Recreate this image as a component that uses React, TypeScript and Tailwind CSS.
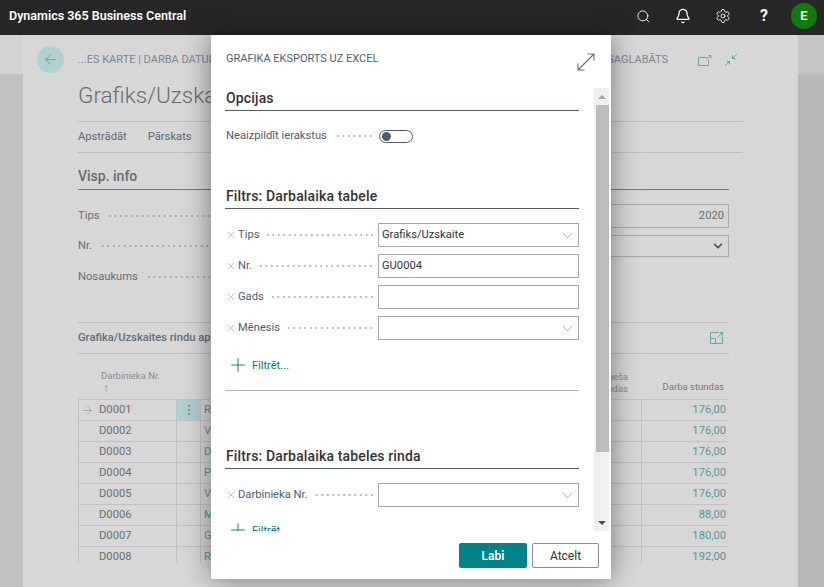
import { ArrowLeft, ArrowRight, Bell, ChevronDown, EllipsisVertical, Plus, Search, Settings, X } from "lucide-react";

const rows = [
  { id: "D0001", name: "R", hours: "176,00" },
  { id: "D0002", name: "V", hours: "176,00" },
  { id: "D0003", name: "D", hours: "176,00" },
  { id: "D0004", name: "P", hours: "176,00" },
  { id: "D0005", name: "V", hours: "176,00" },
  { id: "D0006", name: "M", hours: "88,00" },
  { id: "D0007", name: "G", hours: "180,00" },
  { id: "D0008", name: "R", hours: "192,00" },
];

const dots = "flex-1 h-[2px] bg-[radial-gradient(circle,#b4b9c0_0.7px,transparent_1px)] bg-[length:5.5px_2px] bg-repeat-x";
const pageDots = "flex-1 h-[2px] bg-[radial-gradient(circle,#a8a8a8_0.7px,transparent_1px)] bg-[length:5.5px_2px] bg-repeat-x";

function FilterField({ label, value, select }: { label: string; value?: string; select?: boolean }) {
  return (
    <div className="flex items-center h-[24px]">
      <div className="w-[153px] flex items-center pr-[5px] text-[#505c6d]">
        <X size={12} strokeWidth={1} className="text-[#8b929c] mr-px shrink-0" />
        <span className="mr-[6px] pt-px">{label}</span>
        <span className={dots} />
      </div>
      <div className="w-[201px] h-[24px] border border-[#a6a6a6] flex items-center justify-between pl-[3px] pr-[2px] text-[#333]">
        <span className="pt-px">{value}</span>
        {select && <ChevronDown size={17} strokeWidth={0.8} className="text-[#6b6b6b]" />}
      </div>
    </div>
  );
}

function SectionTitle({ children }: { children: string }) {
  return (
    <div className="w-[354px] h-[23px] border-b border-[#505c6d] pl-px text-[14px] leading-[21px] tracking-[0.15px] font-medium text-[#333]">
      {children}
    </div>
  );
}

function AddFilter() {
  return (
    <div className="flex items-center h-[20px] pl-[2px] text-[#00797c] text-[11px]">
      <Plus size={22} strokeWidth={1} className="mr-[3px] mb-[3px] shrink-0" />
      <span>Filtrēt...</span>
    </div>
  );
}

function ExportDialog() {
  return (
    <div className="absolute left-[211px] top-[35px] w-[400px] h-[544px] bg-white flex flex-col shadow-[0_0_26px_rgba(0,0,0,0.45)] text-[11.2px]">
      <div className="h-[53px] shrink-0 flex items-start justify-between pl-[15px] pr-[16px] pt-[17px]">
        <span className="text-[11px] leading-[13px] text-[#505c6d]">GRAFIKA EKSPORTS UZ EXCEL</span>
        <svg width="18" height="18" viewBox="0 0 18 18" fill="none" stroke="#6f6f6f" strokeWidth="1.1" className="mt-px">
          <path d="M1 17 17 1M10.5 1H17V7.5M1 10.5V17H7.5" />
        </svg>
      </div>

      <div className="h-[443px] shrink-0 flex">
        <div className="w-[383px] overflow-hidden pl-[14px]">
          <SectionTitle>Opcijas</SectionTitle>
          <div className="flex items-center h-[16px] mt-[17px] text-[#505c6d]">
            <div className="w-[154px] flex items-center pl-px pr-[7px]">
              <span className="mr-[8px]">Neaizpildīt ierakstus</span>
              <span className={dots} />
            </div>
            <div className="w-[34px] h-[13px] rounded-full border border-[#505c6d] flex items-center pl-[2px]">
              <span className="w-[9px] h-[9px] rounded-full bg-[#505c6d]" />
            </div>
          </div>

          <div className="h-[42px]" />
          <SectionTitle>Filtrs: Darbalaika tabele</SectionTitle>
          <div className="mt-[14px] flex flex-col gap-[7px] w-[354px]">
            <FilterField label="Tips" value="Grafiks/Uzskaite" select />
            <FilterField label="Nr." value="GU0004" />
            <FilterField label="Gads" />
            <FilterField label="Mēnesis" select />
          </div>
          <div className="mt-[16px]">
            <AddFilter />
          </div>
          <div className="w-[354px] mt-[14px] border-b border-[#b3b8c0]" />

          <div className="h-[55px]" />
          <SectionTitle>Filtrs: Darbalaika tabeles rinda</SectionTitle>
          <div className="mt-[14px] w-[354px]">
            <FilterField label="Darbinieka Nr." select />
          </div>
          <div className="mt-[14px]">
            <AddFilter />
          </div>
        </div>

        <div className="w-[15px] bg-[#f0f0f0] flex flex-col">
          <div className="h-[17px] flex items-center justify-center">
            <div className="w-0 h-0 border-x-[4px] border-x-transparent border-b-[4px] border-b-[#a3a3a3]" />
          </div>
          <div className="ml-[2px] w-[13px] h-[347px] bg-[#bdbdbd]" />
          <div className="flex-1" />
          <div className="h-[17px] flex items-center justify-center">
            <div className="w-0 h-0 border-x-[4px] border-x-transparent border-t-[4px] border-t-[#505050]" />
          </div>
        </div>
      </div>

      <div className="flex justify-end gap-[5px] pr-[12px] pt-[12px] text-[12px]">
        <button className="w-[68px] h-[25px] rounded-[2px] bg-[#008489] text-white font-semibold">Labi</button>
        <button className="w-[67px] h-[25px] rounded-[2px] border border-[#8a8a8a] text-[#333]">Atcelt</button>
      </div>
    </div>
  );
}

function PageCard() {
  return (
    <div className="flex-1 bg-[#d7d7d7] flex text-[#6d6d6d] text-[11.2px]">
      <div className="w-[14px] shrink-0" />
      <div className="flex flex-col w-[27px] shrink-0 pt-[11px]">
        <div className="w-[27px] h-[27px] rounded-full bg-[#b0d0d2] flex items-center justify-center">
          <ArrowLeft size={17} strokeWidth={0.9} className="text-[#6a7f80]" />
        </div>
      </div>
      <div className="ml-[14px] w-[665px] flex flex-col">
        <div className="h-[18px] mt-[16px] pr-[5px] flex items-center justify-between text-[11px] text-[#7f8690]">
          <span>...ES KARTE | DARBA DATUMI</span>
          <div className="flex items-center">
            <span className="mr-[30px]">SAGLABĀTS</span>
            <svg width="14" height="11" viewBox="0 0 14 11" fill="none" stroke="#6ea3a5" strokeWidth="1" className="mr-[12px]">
              <path d="M9 2.5H.5v8h10V5M8.5 4.5 13 .5M10.5.5H13V3" />
            </svg>
            <svg width="14" height="14" viewBox="0 0 14 14" fill="none" stroke="#6ea3a5" strokeWidth="1">
              <path d="M13 1 8.5 5.5M8.5 2.5v3h3M1 13l4.5-4.5M2.5 8.5h3v3" />
            </svg>
          </div>
        </div>
        <div className="h-[32px] mt-[10px] text-[22.5px] leading-[32px] font-light text-[#6b6b6b]">Grafiks/Uzskaite</div>
        <div className="h-[30px] mt-[10px] border-y border-[#bdbdbd] w-[665px] flex items-center gap-[21px] text-[#5f6772] box-content">
          <span>Apstrādāt</span>
          <span>Pārskats</span>
        </div>

        <div className="w-[651px]">
          <div className="h-[22px] mt-px border-b border-[#6e7480] pt-[13px] text-[14px] leading-[18px] font-medium text-[#666c75] box-content">Visp. info</div>
          <div className="mt-[14px] flex items-center h-[24px] justify-between">
            <div className="flex items-center w-[200px]">
              <span className="mr-[8px] pt-px">Tips</span>
              <span className={pageDots} />
            </div>
            <div className="w-[160px] h-[24px] border-y border-r border-[#a8a8a8] flex items-center justify-end pr-[4px] pt-px">2020</div>
          </div>
          <div className="mt-[7px] flex items-center h-[22px] justify-between">
            <div className="flex items-center w-[200px]">
              <span className="mr-[8px] pt-px">Nr.</span>
              <span className={pageDots} />
            </div>
            <div className="w-[160px] h-[22px] border-y border-r border-[#a8a8a8] flex items-center justify-end pr-[3px]">
              <ChevronDown size={14} strokeWidth={2.6} className="text-[#444]" />
            </div>
          </div>
          <div className="mt-[11px] flex items-center h-[18px] w-[200px]">
            <span className="mr-[8px] pt-px">Nosaukums</span>
            <span className={pageDots} />
          </div>

          <div className="mt-[36px] h-[30px] border-y border-[#bdbdbd] flex items-center justify-between pr-[6px] box-content">
            <span className="font-medium text-[#666c75]">Grafika/Uzskaites rindu apstrāde</span>
            <svg width="13" height="12" viewBox="0 0 13 12" fill="none" stroke="#6ea3a5" strokeWidth="1">
              <path d="M8 .5H.5v11h12V4.5M.5 6.5h5v5M7.5 5.5 12.5.5M9.5.5h3v3" />
            </svg>
          </div>

          <div className="h-[45px] flex text-[9.5px] leading-[12px] text-[#8b8b8b]">
            <div className="w-[99px] pl-[23px] pt-[16px]">
              <div>Darbinieka Nr.</div>
              <div className="pl-[2px] text-[12px]">↑</div>
            </div>
            <div className="w-[24px]" />
            <div className="flex-1 flex justify-end items-end pb-[4px] pr-[13px] text-right">
              <div>Mēneša<br />stundas</div>
            </div>
            <div className="w-[88px] flex justify-end items-end pb-[6px] pr-[5px] text-[#7a7a7a]">Darba stundas</div>
          </div>

          <div className="h-[164px] overflow-hidden border-l border-[#bfc1c5]">
            {rows.map((row, i) => (
              <div key={row.id} className="h-[21px] flex items-center border-t border-[#bfc1c5]">
                <div className="w-[98px] flex items-center pl-[2px] border-r border-[#bfc1c5] h-full">
                  <div className="w-[18px]">{i === 0 && <ArrowRight size={13} strokeWidth={0.9} className="text-[#777]" />}</div>
                  <span className="pt-px">{row.id}</span>
                </div>
                <div className={`w-[24px] h-full flex items-center justify-center border-r border-[#bfc1c5] ${i === 0 ? "bg-[#b0d0d2]" : ""}`}>
                  {i === 0 && <EllipsisVertical size={14} strokeWidth={1.2} className="text-[#55797b]" />}
                </div>
                <div className="flex-1 pl-[3px] pt-px text-[#5c9496]">{row.name}</div>
                <div className="w-[88px] h-full flex items-center justify-end pr-[3px] pt-px border-l border-[#bfc1c5] text-[#5c9496]">{row.hours}</div>
              </div>
            ))}
          </div>
        </div>
      </div>
    </div>
  );
}

export default function App() {
  return (
    <div className="relative w-[824px] h-[587px] overflow-hidden flex flex-col bg-[#bcbdbc] font-['Roboto','Liberation_Sans',sans-serif]">
      <header className="h-[35px] shrink-0 bg-[#262626] flex items-center justify-between pl-[9px] pr-[7px] pb-[3px] text-white">
        <span className="text-[12.5px] font-semibold">Dynamics 365 Business Central</span>
        <div className="flex items-center">
          <Search size={15} strokeWidth={1.4} />
          <Bell size={16} strokeWidth={1.9} className="ml-[24px]" />
          <Settings size={16} strokeWidth={1.3} className="ml-[24px]" />
          <span className="ml-[29px] text-[16px] font-bold leading-none">?</span>
          <span className="ml-[23px] w-[26px] h-[26px] rounded-full bg-[#107c10] flex items-center justify-center text-[13px] font-semibold">E</span>
        </div>
      </header>
      <main className="flex-1 flex">
        <div className="w-[23px] shrink-0 flex flex-col">
          <div className="h-[40px] border-b border-[#c2c2c2] bg-[#d2d2d2]" />
          <div className="flex-1 bg-[#bfc0bf]" />
        </div>
        <PageCard />
        <div className="w-[26px] shrink-0 flex flex-col">
          <div className="h-[40px] border-b border-[#bdbdbd] bg-[#c6c6c6]" />
          <div className="flex-1 bg-[#b8b9b8]" />
        </div>
      </main>
      <ExportDialog />
    </div>
  );
}
